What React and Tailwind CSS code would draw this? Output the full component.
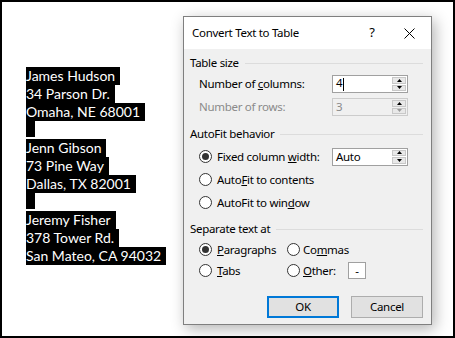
import React from 'react';

const addresses = [
  ['James Hudson', '34 Parson Dr.', 'Omaha, NE 68001'],
  ['Jenn Gibson', '73 Pine Way', 'Dallas, TX 82001'],
  ['Jeremy Fisher', '378 Tower Rd.', 'San Mateo, CA 94032'],
];

const Line = ({ children }) => (
  <div className="h-[18px]">
    <span className="inline-block h-[18px] bg-black pr-[5px] text-white leading-[18px] whitespace-pre">{children}</span>
  </div>
);

const Blank = () => (
  <div className="h-[18px]">
    <span className="inline-block h-[18px] w-[9px] bg-black" />
  </div>
);

const Radio = ({ checked }) => (
  <span className="flex h-[13px] w-[13px] shrink-0 items-center justify-center rounded-full border border-[#333] bg-white">
    {checked && <span className="h-[7px] w-[7px] rounded-full bg-[#333]" />}
  </span>
);

const Spinner = ({ disabled }) => (
  <div className="flex h-full w-[14px] flex-col justify-center gap-[1px] py-[1px]">
    <div className="flex h-[7px] items-center justify-center border border-[#c8c8c8] bg-[#e8e8e8]">
      <svg width="5" height="3" viewBox="0 0 5 3"><path d="M0 3 L2.5 0 L5 3 Z" fill="#000" /></svg>
    </div>
    <div className="flex h-[7px] items-center justify-center border border-[#c8c8c8] bg-[#e8e8e8]">
      <svg width="5" height="3" viewBox="0 0 5 3"><path d="M0 0 L2.5 3 L5 0 Z" fill={disabled ? '#9a9a9a' : '#000'} /></svg>
    </div>
  </div>
);

const NumberBox = ({ value, disabled, caret }) => (
  <div className={`flex h-[18px] w-[76px] items-center border pl-[3px] pr-[1px] ${disabled ? 'border-[#cccccc] bg-[#f0f0f0] text-[#8a8a8a]' : 'border-[#a0a0a0] bg-white text-black'}`}>
    <span className="flex-1 leading-none">
      {value}
      {caret && <span className="ml-[1px] inline-block h-[13px] w-px bg-black align-middle" />}
    </span>
    <Spinner disabled={disabled} />
  </div>
);

const Section = ({ label }) => (
  <div className="flex h-[18px] items-center gap-[6px] pl-[6px] pr-[8px]">
    <span>{label}</span>
    <span className="h-px flex-1 bg-[#dcdcdc]" />
  </div>
);

export default function App() {
  return (
    <div className="flex h-[338px] w-[455px] items-start border-2 border-black bg-white">
      <div className="w-[181px] pl-[24px] pt-[63px] font-['Lato',sans-serif] text-[14px]">
        {addresses.map((a, i) => (
          <div key={i}>
            {a.map((l) => <Line key={l}>{l}</Line>)}
            {i < addresses.length - 1 && <Blank />}
          </div>
        ))}
      </div>

      <div className="mt-[14px] flex h-[309px] w-[249px] flex-col border border-[#7f7f7f] bg-[#f0f0f0] font-['Segoe_UI','Noto_Sans',sans-serif] text-[11.5px] tracking-[-0.3px] text-black shadow-[3px_4px_14px_rgba(0,0,0,0.3)]">
        <div className="flex h-[32px] items-center bg-white pl-[8px]">
          <span className="flex-1">Convert Text to Table</span>
          <span className="w-[30px] text-center text-[13px]">?</span>
          <span className="flex w-[44px] items-center justify-center">
            <svg width="11" height="11" viewBox="0 0 11 11"><path d="M0.5 0.5 L10.5 10.5 M10.5 0.5 L0.5 10.5" stroke="#000" strokeWidth="1" /></svg>
          </span>
        </div>

        <div className="flex flex-1 flex-col pt-[5px]">
          <Section label="Table size" />
          <div className="mt-[1px] flex h-[22px] items-center pl-[15px]">
            <span className="w-[133px]">Number of <u>c</u>olumns:</span>
            <NumberBox value="4" caret />
          </div>
          <div className="flex h-[24px] items-center pl-[15px]">
            <span className="w-[133px] text-[#8a8a8a]">Number of rows:</span>
            <NumberBox value="3" disabled />
          </div>

          <div className="mt-[6px]"><Section label="AutoFit behavior" /></div>
          <div className="mt-[2px] flex h-[23px] items-center pl-[15px]">
            <Radio checked />
            <span className="w-[120px] pl-[5px]">Fixed column <u>w</u>idth:</span>
            <NumberBox value="Auto" />
          </div>
          <div className="flex h-[23px] items-center gap-[5px] pl-[15px]">
            <Radio />
            <span>Auto<u>F</u>it to contents</span>
          </div>
          <div className="flex h-[23px] items-center gap-[5px] pl-[15px]">
            <Radio />
            <span>AutoFit to win<u>d</u>ow</span>
          </div>

          <div className="mt-[6px]"><Section label="Separate text at" /></div>
          <div className="mt-[1px] grid grid-cols-[88px_1fr] pl-[15px]">
            <div className="flex h-[21px] items-center gap-[5px]">
              <Radio checked />
              <span><u>P</u>aragraphs</span>
            </div>
            <div className="flex h-[21px] items-center gap-[3px]">
              <Radio />
              <span>Co<u>m</u>mas</span>
            </div>
            <div className="flex h-[21px] items-center gap-[5px]">
              <Radio />
              <span><u>T</u>abs</span>
            </div>
            <div className="flex h-[21px] items-center gap-[3px]">
              <Radio />
              <span className="w-[42px]"><u>O</u>ther:</span>
              <span className="flex h-[17px] w-[18px] items-center justify-center border border-[#a0a0a0] bg-white">-</span>
            </div>
          </div>

          <div className="mt-[15px] flex justify-end gap-[12px] pr-[8px]">
            <button className="h-[22px] w-[72px] border-2 border-[#0078d7] bg-[#e1e1e1]">OK</button>
            <button className="h-[22px] w-[72px] border border-[#adadad] bg-[#e1e1e1]">Cancel</button>
          </div>
        </div>
      </div>
    </div>
  );
}
